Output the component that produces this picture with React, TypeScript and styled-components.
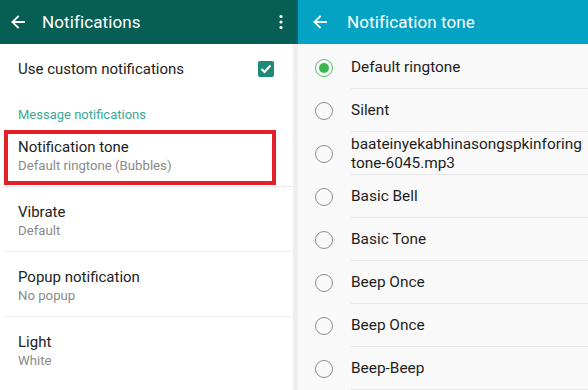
import React from "react";
import styled, { createGlobalStyle } from "styled-components";

const Global = createGlobalStyle`
  html, body { margin: 0; padding: 0; }
  body { font-family: "Roboto", "Noto Sans", sans-serif; background: #fff; }
  * { box-sizing: border-box; }
`;

const Screen = styled.div`
  display: flex;
  width: 588px;
  height: 390px;
  overflow: hidden;
`;

const LeftPanel = styled.div`
  width: 293px;
  display: flex;
  flex-direction: column;
  background: #ffffff;
`;

const Seam = styled.div`
  width: 5px;
  display: flex;
  flex-direction: column;
  background: #eeeeee;
`;

const SeamTop = styled.div`
  height: 44px;
  background: linear-gradient(90deg, #075e54 0 3px, #08626a 3px);
`;

const RightPanel = styled.div`
  flex: 1;
  display: flex;
  flex-direction: column;
  background: #f9f9f9;
`;

const Header = styled.div<{ $bg: string }>`
  height: 44px;
  flex: none;
  display: flex;
  align-items: center;
  background: ${(p) => p.$bg};
  color: #fff;
  padding: 0 10px 0 10px;
`;

const Title = styled.div<{ $ml: number }>`
  font-size: 17px;
  margin-left: ${(p) => p.$ml}px;
  flex: 1;
  color: #fff;
  letter-spacing: 0.1px;
`;

const IconBox = styled.div<{ $ml?: number }>`
  display: flex;
  align-items: center;
  margin-left: ${(p) => p.$ml ?? 0}px;
`;

const SwitchRow = styled.div`
  height: 50px;
  display: flex;
  align-items: center;
  justify-content: space-between;
  padding: 0 19px 0 18px;
  font-size: 15px;
  color: #222;
`;

const CheckBox = styled.div`
  width: 16px;
  height: 16px;
  border-radius: 2px;
  background: #1c8a77;
  display: flex;
  align-items: center;
  justify-content: center;
`;

const SectionLabel = styled.div`
  font-size: 13px;
  line-height: 16px;
  color: #3aa897;
  padding: 13px 18px 0 18px;
  height: 28px;
`;

const PrefList = styled.div`
  display: flex;
  flex-direction: column;
`;

const Pref = styled.div`
  height: 65px;
  display: flex;
  flex-direction: column;
  justify-content: center;
  padding: 3px 18px 0 13px;
  margin-left: 5px;
  border-bottom: 1px solid #eeeeee;
  position: relative;
  &:last-child { border-bottom: none; }
`;

const Highlight = styled.div`
  position: absolute;
  left: -1px;
  top: 8px;
  width: 272px;
  height: 55px;
  border: 4px solid #e3202a;
`;

const PrefTitle = styled.div`
  font-size: 15px;
  color: #222;
  line-height: 19px;
`;

const PrefSub = styled.div`
  font-size: 13.2px;
  color: #8a8a8a;
  line-height: 17px;
`;

const ToneList = styled.div`
  display: flex;
  flex-direction: column;
  padding-top: 2px;
`;

const Tone = styled.div`
  height: 43px;
  display: flex;
  align-items: center;
  padding-left: 17px;
`;

const Radio = styled.div<{ $on?: boolean }>`
  width: 18px;
  height: 18px;
  flex: none;
  border-radius: 50%;
  border: 1.5px solid ${(p) => (p.$on ? "#55c26a" : "#8c8c8c")};
  display: flex;
  align-items: center;
  justify-content: center;
  &::after {
    content: "";
    display: ${(p) => (p.$on ? "block" : "none")};
    width: 10px;
    height: 10px;
    border-radius: 50%;
    background: #3bb552;
  }
`;

const ToneLabel = styled.div`
  margin-left: 18px;
  flex: 1;
  height: 100%;
  display: flex;
  align-items: center;
  border-bottom: 1px solid #e6e6e6;
  font-size: 15.4px;
  line-height: 19px;
  color: #1e1e1e;
  padding-top: 1px;
  white-space: nowrap;
`;

const Arrow = () => (
  <svg width="16" height="16" viewBox="0 0 16 16" fill="none" stroke="#fff" strokeWidth="1.8" strokeLinecap="square">
    <path d="M14 8H2.5M8 2.5L2.5 8L8 13.5" />
  </svg>
);

const Kebab = () => (
  <svg width="4" height="16" viewBox="0 0 4 16" fill="#fff">
    <circle cx="2" cy="2.5" r="1.6" />
    <circle cx="2" cy="8" r="1.6" />
    <circle cx="2" cy="13.5" r="1.6" />
  </svg>
);

const prefs = [
  { t: "Notification tone", s: "Default ringtone (Bubbles)", hl: true },
  { t: "Vibrate", s: "Default" },
  { t: "Popup notification", s: "No popup" },
  { t: "Light", s: "White" },
];

const tones: { label: React.ReactNode; on?: boolean }[] = [
  { label: "Default ringtone", on: true },
  { label: "Silent" },
  { label: <>baateinyekabhinasongspkinforing<br />tone-6045.mp3</> },
  { label: "Basic Bell" },
  { label: "Basic Tone" },
  { label: "Beep Once" },
  { label: "Beep Once" },
  { label: "Beep-Beep" },
];

export default function App() {
  return (
    <>
      <Global />
      <Screen>
        <LeftPanel>
          <Header $bg="#075e54">
            <IconBox><Arrow /></IconBox>
            <Title $ml={16}>Notifications</Title>
            <IconBox><Kebab /></IconBox>
          </Header>
          <SwitchRow>
            <span>Use custom notifications</span>
            <CheckBox>
              <svg width="12" height="10" viewBox="0 0 12 10" fill="none" stroke="#fff" strokeWidth="2">
                <path d="M1.5 5L4.5 8L10.5 1.5" />
              </svg>
            </CheckBox>
          </SwitchRow>
          <SectionLabel>Message notifications</SectionLabel>
          <PrefList>
            {prefs.map((p) => (
              <Pref key={p.t}>
                {p.hl && <Highlight />}
                <PrefTitle>{p.t}</PrefTitle>
                <PrefSub>{p.s}</PrefSub>
              </Pref>
            ))}
          </PrefList>
        </LeftPanel>
        <Seam>
          <SeamTop />
        </Seam>
        <RightPanel>
          <Header $bg="#05a3c3">
            <IconBox $ml={4}><Arrow /></IconBox>
            <Title $ml={19}>Notification tone</Title>
          </Header>
          <ToneList>
            {tones.map((t, i) => (
              <Tone key={i}>
                <Radio $on={t.on} />
                <ToneLabel>{t.label}</ToneLabel>
              </Tone>
            ))}
          </ToneList>
        </RightPanel>
      </Screen>
    </>
  );
}
